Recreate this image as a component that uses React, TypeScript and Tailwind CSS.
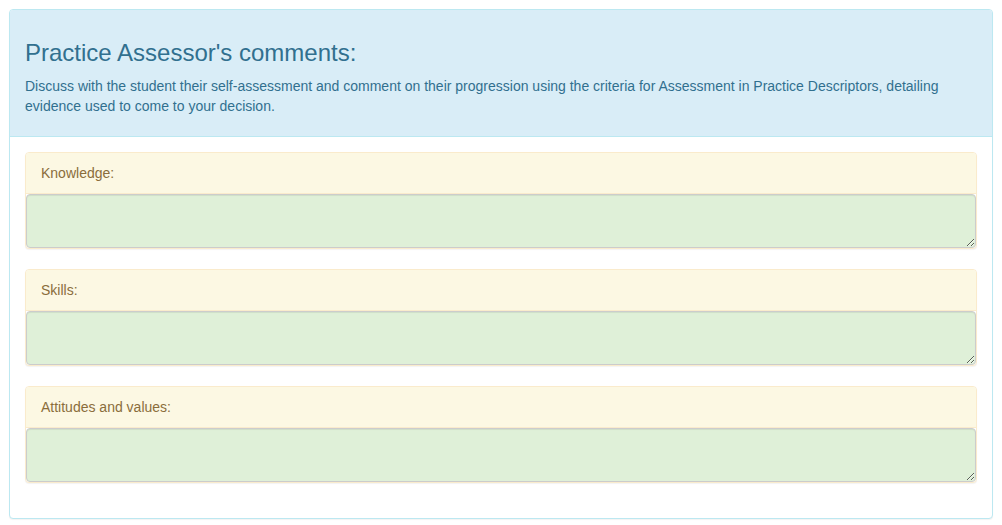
const sections = ['Knowledge:', 'Skills:', 'Attitudes and values:']

function CommentPanel({ label }: { label: string }) {
  return (
    <div className="mb-5 rounded-[4px] border border-[#faebcc] bg-white shadow-[0_1px_1px_rgba(0,0,0,0.05)]">
      <div className="rounded-t-[3px] border-b border-[#faebcc] bg-[#fcf8e3] px-[15px] py-[10px] text-[14px] leading-5 text-[#8a6d3b]">
        {label}
      </div>
      <textarea
        rows={2}
        className="block w-full rounded-[4px] border border-[#ccc] bg-[#dff0d8] px-3 py-[6px] text-[14px] leading-5 text-[#555] shadow-[inset_0_1px_1px_rgba(0,0,0,0.075)] outline-none"
      />
    </div>
  )
}

export default function App() {
  return (
    <div className="min-h-[525px] bg-white px-[9px] pt-[9px] font-['Liberation_Sans',Arial,sans-serif]">
      <div className="rounded-[4px] border border-[#bce8f1] bg-white shadow-[0_1px_1px_rgba(0,0,0,0.05)]">
        <div className="rounded-t-[3px] border-b border-[#bce8f1] bg-[#d9edf7] px-[15px] py-[10px] text-[#31708f]">
          <h3 className="mt-5 mb-[10px] text-[24px] leading-[1.1]">Practice Assessor's comments:</h3>
          <p className="mb-[10px] text-[14px] leading-5">
            Discuss with the student their self-assessment and comment on their progression using the criteria for
            Assessment in Practice Descriptors, detailing evidence used to come to your decision.
          </p>
        </div>
        <div className="p-[15px]">
          {sections.map((s) => (
            <CommentPanel key={s} label={s} />
          ))}
        </div>
      </div>
    </div>
  )
}
